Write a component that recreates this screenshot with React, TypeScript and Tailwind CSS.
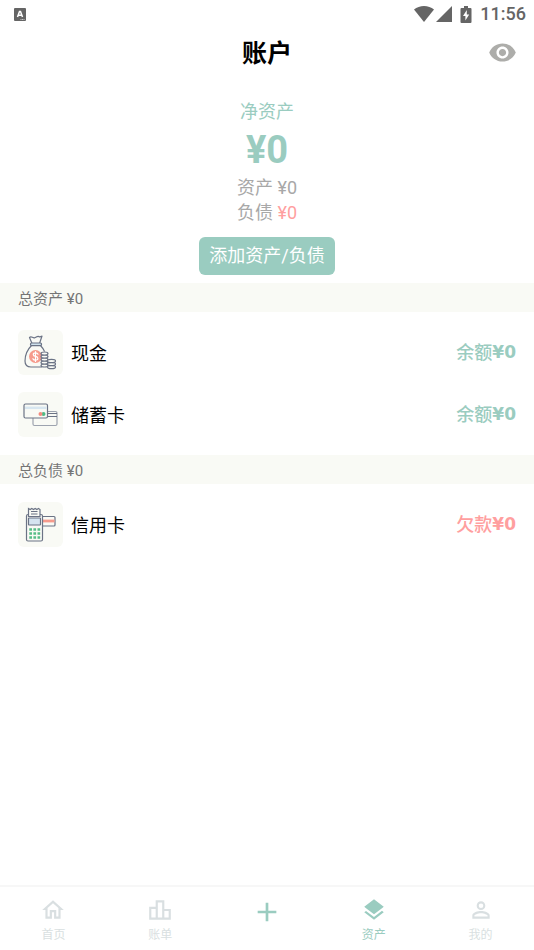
import React, { useState } from 'react'
import { MdAdd, MdLayers, MdOutlineHome, MdOutlineLeaderboard, MdPersonOutline, MdVisibility, MdVisibilityOff } from 'react-icons/md'

const StatusBar = () => {
    return (
        <div className="flex h-7 items-center justify-between pl-3.5 pr-2 text-[#656565]">
            <svg width="12" height="13" viewBox="0 0 12 13">
                <rect width="12" height="13" rx="1" fill="currentColor" />
                <path d="M3.500 9L5.500 3.500h1L8.500 9M4.200 7.200h3.600" fill="none" stroke="#fff" strokeWidth="1.500" />
                <path d="M6.500 11.500h4" stroke="#ccc" strokeDasharray="1 .5" />
            </svg>
            <div className="flex items-center">
                <svg width="20" height="16" viewBox="0 0 20 16" fill="currentColor">
                    <path d="M10 16L0 3.600C2.800 1.300 6.200 0 10 0s7.200 1.300 10 3.600z" />
                </svg>
                <svg className="ml-0.5" width="16" height="16" viewBox="0 0 16 16" fill="currentColor">
                    <path d="M16 0v16H0z" />
                </svg>
                <svg className="ml-2" width="12" height="17" viewBox="0 0 12 17">
                    <path d="M4 0h4v2h2.500q1 0 1 1v13q0 1-1 1h-9q-1 0-1-1V3q0-1 1-1H4z" fill="currentColor" />
                    <path d="M6.800 4L3 10h2.400v4.500L9.200 8.500H6.800z" fill="#fff" />
                </svg>
                <span className="ml-2 text-lg font-medium leading-6">11:56</span>
            </div>
        </div>
    )
}

const CashIcon = () => (
    <svg width="33" height="35" viewBox="0 0 33 35" fill="none" stroke="#6b7385" strokeWidth="1.200" strokeLinecap="round" strokeLinejoin="round">
        <path d="M8 8.500L5.500 2.500c2-1.800 3 .8 5 .3s2.500-2 4.500-1.200 1.500-.4 3-.6L15.500 8.500" />
        <path d="M7.500 10.500C4 14 1 20 1 26c0 4.500 2.500 6 6 6h10.500M16.500 10.500c1.500 1.600 2.800 3.500 3.800 5.500" />
        <circle cx="11.500" cy="21.500" r="6.500" fill="#f69a8c" stroke="none" />
        <path d="M14 19.200c-.5-1-1.300-1.300-2.500-1.300-3 0-3 3.200 0 3.500s3.300 3.800 0 3.800c-1.300 0-2.200-.5-2.600-1.500M11.500 16.500v10" stroke="#fff" strokeWidth="1.200" />
        <rect x="6.500" y="8" width="11" height="2.600" rx="1" fill="#cfe2ec" />
        <g fill="#f9faf5">
            <ellipse cx="20.500" cy="30.500" rx="3.500" ry="1.500" />
            <ellipse cx="20.500" cy="27.500" rx="3.500" ry="1.500" />
            <ellipse cx="20.500" cy="24.500" rx="3.500" ry="1.500" />
            <ellipse cx="20.500" cy="21.500" rx="3.500" ry="1.500" />
            <ellipse cx="20.500" cy="18.500" rx="3.500" ry="1.500" />
            <ellipse cx="27.500" cy="32" rx="4" ry="1.700" />
            <ellipse cx="27.500" cy="29" rx="4" ry="1.700" />
            <ellipse cx="27.500" cy="26" rx="4" ry="1.700" />
        </g>
    </svg>
)

const CardIcon = () => (
    <svg width="35" height="24" viewBox="0 0 35 24" fill="none" stroke="#6b7385" strokeWidth="1.200">
        <path d="M24 8.500h8.500q1.500 0 1.500 1.500v11q0 1.500-1.500 1.500H11.500Q10 22.500 10 21v-6" stroke="#9da3af" />
        <path d="M24 10.500h10M24 13.500h10" />
        <rect x="1" y="1" width="23.500" height="14" rx="1.500" fill="#f9faf5" />
        <path d="M2 4.800h21.500" stroke="#d7e6f0" strokeWidth="2.500" />
        <circle cx="20.500" cy="11" r="2" fill="#4dbb86" stroke="none" />
        <circle cx="17.500" cy="11" r="2" fill="#f58a7e" stroke="none" />
    </svg>
)

const CreditIcon = () => (
    <svg width="31" height="35" viewBox="0 0 31 35" fill="none" stroke="#6b7385" strokeWidth="1.200">
        <rect x="15" y="9.500" width="15" height="9.500" rx="1" />
        <path d="M17 14h12.500" stroke="#f69a8c" strokeWidth="2.800" />
        <rect x="1.500" y="7.500" width="16" height="26.500" rx="1.500" fill="#f9faf5" />
        <path d="M3.500 9.500V1.500l1.700 1 1.600-1 1.700 1 1.700-1 1.600 1 1.700-1 1.500 1v7z" fill="#f9faf5" />
        <path d="M6 4.500h6.500M6 7h6.500" />
        <rect x="3.500" y="11" width="12" height="7" rx=".5" fill="#d5e4f0" />
        <path d="M4.300 22.500h10.900M4.300 26.500h10.900M4.300 30.500h10.900" stroke="#56bd87" strokeWidth="2.700" strokeDasharray="2.700 1.400" />
    </svg>
)

const assets = [
    { name: "现金", label: "余额", icon: <CashIcon /> },
    { name: "储蓄卡", label: "余额", icon: <CardIcon /> },
]

const debts = [
    { name: "信用卡", label: "欠款", icon: <CreditIcon /> },
]

const tabs = [
    { name: "首页", icon: <MdOutlineHome size={26} /> },
    { name: "账单", icon: <MdOutlineLeaderboard size={26} /> },
    { name: "", icon: <MdAdd size={32} /> },
    { name: "资产", icon: <MdLayers size={26} /> },
    { name: "我的", icon: <MdPersonOutline size={26} /> },
]

const Section = ({ title, items, color, hidden }: any) => {
    return (
        <section>
            <h2 className="bg-[#f9faf5] px-[18px] pb-0.5 pt-1.5 text-[15px] leading-[21px] text-[#757575]">{title} {hidden ? "***" : "¥0"}</h2>
            <ul className="flex flex-col gap-[17px] p-[18px]">
                {items.map((item: any) => (
                    <li key={item.name} className="flex items-center">
                        <div className="flex size-[45px] items-center justify-center rounded-md bg-[#f9faf5]">{item.icon}</div>
                        <span className="ml-2 flex-1 pt-0.5 text-lg text-black">{item.name}</span>
                        <span className={"flex items-center text-lg font-medium " + color}>
                            {item.label}
                            <span className="font-['DejaVu_Sans',sans-serif] text-[17px] font-bold">{hidden ? "***" : "¥0"}</span>
                        </span>
                    </li>
                ))}
            </ul>
        </section>
    )
}

export default function App() {
    const [hidden, setHidden] = useState(false)
    const [active, setActive] = useState("资产")
    const amount = hidden ? "***" : "¥0"

    return (
        <div className="flex min-h-screen flex-col bg-white font-[Roboto,'Noto_Sans_CJK_SC',sans-serif]">
            <StatusBar />
            <header className="grid h-12 grid-cols-3 items-center px-[17px]">
                <h1 className="col-start-2 pt-1 text-center text-[25px] font-bold text-black">账户</h1>
                <button aria-label="显示金额" onClick={() => setHidden(!hidden)} className="justify-self-end text-[#adadaa]">
                    {hidden ? <MdVisibilityOff size={29} /> : <MdVisibility size={29} />}
                </button>
            </header>

            <main className="flex-1">
                <div className="flex flex-col items-center pb-2 pt-5 text-lg text-[#a8a8a8]">
                    <p className="leading-8 text-[#9accc0]">净资产</p>
                    <p className="pb-[3px] text-[38px] font-bold leading-11 text-[#9accc0]">{amount}</p>
                    <p className="leading-[25px]">资产 {amount}</p>
                    <p className="leading-[25px]">负债 <span className="text-[#ff9f9f]">{amount}</span></p>
                    <button className="mt-3 rounded-md bg-[#9accc0] px-2.5 leading-[38px] text-white">添加资产/负债</button>
                </div>
                <Section title="总资产" items={assets} color="text-[#9accc0]" hidden={hidden} />
                <Section title="总负债" items={debts} color="text-[#ff9f9f]" hidden={hidden} />
            </main>

            <nav className="sticky bottom-0 grid h-[65px] grid-cols-5 border-t-2 border-[#f7f7f7] bg-white">
                {tabs.map((tab) => (
                    <button
                        key={tab.name}
                        aria-label={tab.name || "添加"}
                        onClick={() => tab.name && setActive(tab.name)}
                        className={"flex flex-col items-center " + (tab.name ? "pt-2.5 " : "pt-[9px] ") + (!tab.name || tab.name == active ? "text-[#9accc0]" : "text-[#d9dfe1]")}>
                        {tab.icon}
                        {tab.name && <span className="text-xs leading-6">{tab.name}</span>}
                    </button>
                ))}
            </nav>
        </div>
    )
}
